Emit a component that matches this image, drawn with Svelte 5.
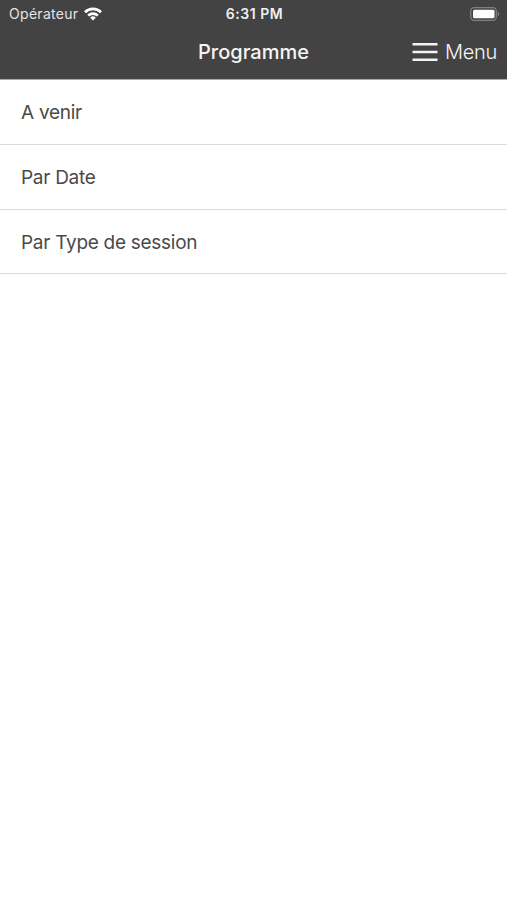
<script>
  const items = ['A venir', 'Par Date', 'Par Type de session']
</script>

<div class="screen">
  <header>
    <div class="status-bar">
      <div class="carrier">
        <span>Opérateur</span>
        <svg class="wifi" viewBox="0 0 18 14" fill="none" stroke="currentColor" stroke-width="2.7">
          <path d="M1 5.2a11.4 11.4 0 0 1 16 0"/>
          <path d="M4.2 8.6a6.8 6.8 0 0 1 9.6 0"/>
          <path d="M9 13.6L6.2 10.7a4 4 0 0 1 5.6 0z" fill="currentColor" stroke="none"/>
        </svg>
      </div>
      <span class="time">6:31 PM</span>
      <svg class="battery" viewBox="0 0 30 14" fill="none">
        <rect x="0.7" y="0.7" width="25.6" height="12.6" rx="3.5" stroke="#808080" stroke-width="1.3"/>
        <rect x="3" y="2.7" width="21.5" height="8.6" rx="1.5" fill="#fff"/>
        <path d="M27.7 4.5v5c2-1 2-4 0-5z" fill="#808080"/>
      </svg>
    </div>
    <nav>
      <h1>Programme</h1>
      <button class="menu">
        <svg class="bars" viewBox="0 0 26 20" stroke="currentColor" stroke-width="2.4">
          <path d="M0.5 2.3h25M0.5 10h25M0.5 17.7h25"/>
        </svg>
        Menu
      </button>
    </nav>
  </header>

  <ul>
    {#each items as item}
      <li>{item}</li>
    {/each}
  </ul>
</div>

<style>
  :global(body) {
    margin: 0;
    background: #fff;
  }

  .screen {
    min-height: 900px;
    font-family: Inter, "Liberation Sans", sans-serif;
    background: #fff;
  }

  header {
    height: 79px;
    border-bottom: 1px solid #a8a8a8;
    background: #434343;
    color: #fff;
  }

  .status-bar {
    display: grid;
    grid-template-columns: 1fr auto 1fr;
    align-items: center;
    height: 27px;
    padding: 0 7px 0 9px;
    font-size: 14px;
  }

  .carrier {
    display: flex;
    align-items: center;
    gap: 6px;
    color: #e4e4e4;
    letter-spacing: 0.3px;
  }

  .wifi {
    width: 18px;
    height: 14px;
    color: #fff;
  }

  .time {
    font-size: 14px;
    font-weight: 600;
    letter-spacing: 0.55px;
    color: #f0f0f0;
  }

  .battery {
    width: 30px;
    height: 14px;
    justify-self: end;
  }

  nav {
    display: grid;
    grid-template-columns: 1fr auto 1fr;
    align-items: center;
    height: 50px;
  }

  h1 {
    grid-column: 2;
    margin: 0;
    font-size: 20px;
    font-weight: 500;
    color: #f4f4f4;
  }

  .menu {
    display: flex;
    align-items: center;
    justify-self: end;
    gap: 7px;
    margin-right: 10px;
    padding: 0;
    border: 0;
    background: none;
    color: #f4f4f4;
    font: 300 20px Inter, "Liberation Sans", sans-serif;
    letter-spacing: -0.3px;
  }

  .bars {
    width: 26px;
    height: 20px;
  }

  ul {
    margin: 0;
    padding: 0;
    list-style: none;
  }

  li {
    display: flex;
    align-items: center;
    box-sizing: border-box;
    height: 64.75px;
    padding: 2px 0 0 21px;
    border-bottom: 1px solid #dcdcdc;
    font-size: 19px;
    letter-spacing: -0.28px;
    color: #4a4a4a;
  }
</style>
